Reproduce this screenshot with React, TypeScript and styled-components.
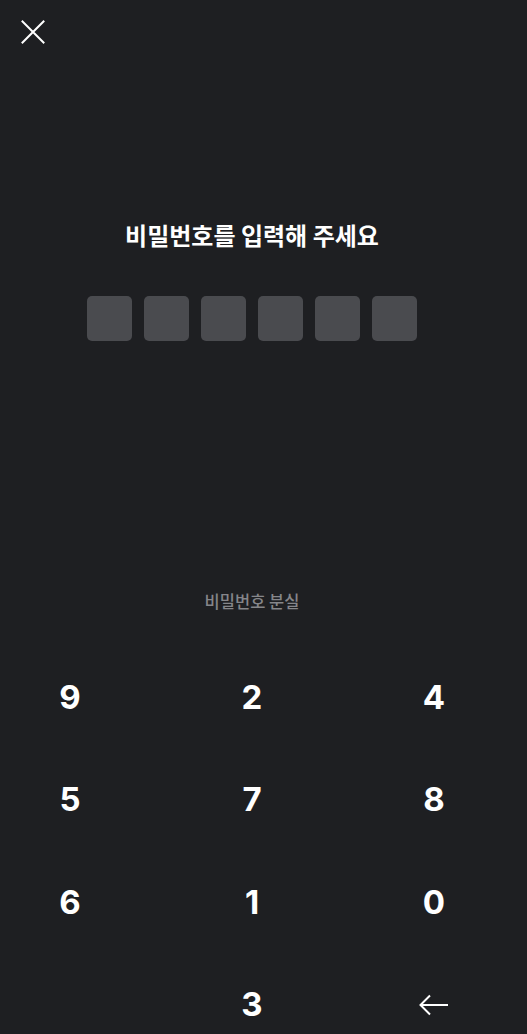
import React from "react";
import styled, { createGlobalStyle } from "styled-components";

const Global = createGlobalStyle`
  html, body { margin: 0; padding: 0; background: #1e1f22; }
  body { font-family: "Noto Sans CJK KR", "Noto Sans", sans-serif; color: #ffffff; overflow: hidden; }
`;

const Page = styled.div`
  width: 504px;
  min-height: 1034px;
  display: flex;
  flex-direction: column;
  align-items: center;
  background: #1e1f22;
`;

const Header = styled.div`
  align-self: stretch;
  height: 62px;
  display: flex;
  align-items: flex-start;
  padding: 20px 0 0 21px;
  box-sizing: border-box;
`;

const CloseButton = styled.button`
  width: 24px;
  height: 24px;
  padding: 0;
  border: none;
  background: transparent;
  display: flex;
`;

const Title = styled.h1`
  margin: 156px 0 0;
  font-size: 24px;
  line-height: 34px;
  font-weight: 700;
  color: #ffffff;
  letter-spacing: 0;
`;

const Slots = styled.div`
  margin-top: 44px;
  display: flex;
  gap: 12px;
`;

const Slot = styled.div<{ $filled?: boolean }>`
  width: 45px;
  height: 45px;
  border-radius: 5px;
  background: ${(p) => (p.$filled ? "#8a8b90" : "#4a4b4f")};
`;

const Forgot = styled.button`
  margin-top: 249px;
  border: none;
  background: transparent;
  padding: 0;
  font-family: "Noto Sans CJK KR", "Noto Sans", sans-serif;
  font-size: 16.5px;
  line-height: 22px;
  font-weight: 500;
  color: #85868a;
`;

const Keypad = styled.div`
  margin-top: 34px;
  align-self: stretch;
  display: grid;
  grid-template-columns: repeat(3, 120px);
  justify-content: space-between;
  grid-auto-rows: 102.5px;
  padding: 0 10px 0 10px;
`;

const Key = styled.button`
  border: none;
  background: transparent;
  padding: 0;
  display: flex;
  align-items: center;
  justify-content: center;
  font-family: "Inter", "Liberation Sans", sans-serif;
  font-size: 33px;
  font-weight: 700;
  color: #ffffff;
  line-height: 1;
`;

const rows = ["9", "2", "4", "5", "7", "8", "6", "1", "0"];

export default function App() {
  return (
    <>
      <Global />
      <Page>
        <Header>
          <CloseButton aria-label="닫기">
            <svg width="24" height="24" viewBox="0 0 24 24">
              <path d="M1.5 1.5 L22.5 22.5 M22.5 1.5 L1.5 22.5" stroke="#ffffff" strokeWidth="2" strokeLinecap="square" />
            </svg>
          </CloseButton>
        </Header>
        <Title>비밀번호를 입력해 주세요</Title>
        <Slots>
          {Array.from({ length: 6 }).map((_, i) => (
            <Slot key={i} />
          ))}
        </Slots>
        <Forgot>비밀번호 분실</Forgot>
        <Keypad>
          {rows.map((d) => (
            <Key key={d}>{d}</Key>
          ))}
          <Key as="div" />
          <Key>3</Key>
          <Key aria-label="지우기">
            <svg width="30" height="22" viewBox="0 0 30 22">
              <path d="M29 11 H2 M11 1.5 L1.5 11 L11 20.5" stroke="#ffffff" strokeWidth="2" fill="none" />
            </svg>
          </Key>
        </Keypad>
      </Page>
    </>
  );
}
